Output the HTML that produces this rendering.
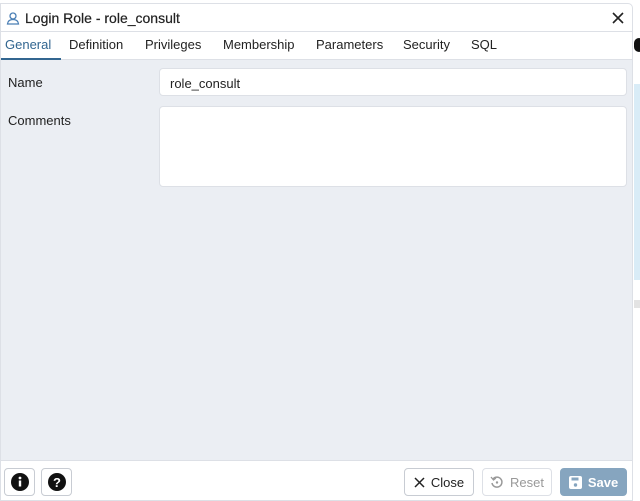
<!DOCTYPE html>
<html><head><style>
body{margin:0;width:640px;height:501px;position:relative;overflow:hidden;background:#fff;font-family:"Liberation Sans",sans-serif;font-size:13px;color:#222}
.bgs{position:absolute;left:634px;top:0;width:6px}
.dlg{position:absolute;left:0;top:3px;width:633px;height:498px;background:#fff;border:1px solid #dde0e6;border-radius:0 5px 0 0;box-sizing:border-box;overflow:hidden}
.title{height:27px;border-bottom:1px solid #dde0e6;display:flex;align-items:center;font-size:14px;color:#222;font-weight:500;-webkit-text-stroke:0.2px #222}
.tabs{height:27px;border-bottom:1px solid #dde0e6;position:relative}
.tabs span{position:absolute;top:5px;font-size:13px;color:#222}
.content{position:absolute;top:56px;left:0;right:0;height:400px;background:#ebeef3}
.input{position:absolute;background:#fff;border:1px solid #dde0e6;border-radius:4px;box-sizing:border-box}
.footer{position:absolute;top:456px;left:0;right:0;bottom:0;border-top:1px solid #dde0e6;background:#fff}
.btn{position:absolute;top:7px;height:28px;border:1px solid #c8ccd3;border-radius:4px;box-sizing:border-box;display:flex;align-items:center;justify-content:center;gap:6px;font-size:13px}
</style></head><body>
<div class="bgs" style="top:38px;height:16px"><div style="width:10px;height:14px;background:#111;border-radius:7px"></div></div>
<div class="bgs" style="top:84px;height:196px;background:#d9ecf7"></div>
<div class="bgs" style="top:300px;height:8px;background:#e3e3e3"></div>
<div class="dlg">
<div class="title"><svg width="14" height="14" viewBox="0 0 14 14" style="margin:0 5px 0 5px"><circle cx="7" cy="5" r="3" fill="none" stroke="#4a7fb5" stroke-width="1.3"/><path d="M1.5 13 Q2 8.5 7 8.5 Q12 8.5 12.5 13 Z" fill="none" stroke="#4a7fb5" stroke-width="1.3"/></svg>Login Role - role_consult
<svg width="12" height="12" viewBox="0 0 12 12" style="position:absolute;left:611px;top:8px"><path d="M1 1L11 11M11 1L1 11" stroke="#222" stroke-width="1.6"/></svg></div>
<div class="tabs">
<span style="left:4px;color:#326690">General</span><div style="position:absolute;left:0;width:60px;bottom:-1px;height:2px;background:#326690"></div>
<span style="left:68px">Definition</span><span style="left:144px">Privileges</span><span style="left:222px">Membership</span><span style="left:315px">Parameters</span><span style="left:402px">Security</span><span style="left:470px">SQL</span>
</div>
<div class="content">
<div style="position:absolute;left:7px;top:15px">Name</div>
<div class="input" style="left:158px;top:8px;width:468px;height:28px;padding:7px 10px">role_consult</div>
<div style="position:absolute;left:7px;top:53px">Comments</div>
<div class="input" style="left:158px;top:46px;width:468px;height:81px"></div>
</div>
<div class="footer">
<div class="btn" style="left:3px;width:31px"><svg width="18" height="18" viewBox="0 0 18 18"><circle cx="9" cy="9" r="9" fill="#111"/><rect x="7.8" y="7.5" width="2.4" height="6" fill="#fff"/><circle cx="9" cy="5" r="1.4" fill="#fff"/></svg></div>
<div class="btn" style="left:40px;width:31px"><svg width="18" height="18" viewBox="0 0 18 18"><circle cx="9" cy="9" r="9" fill="#111"/><text x="9" y="14" text-anchor="middle" fill="#fff" font-size="13" font-weight="bold" font-family="Liberation Sans">?</text></svg></div>
<div class="btn" style="left:403px;width:70px;color:#222"><svg width="11" height="11" viewBox="0 0 11 11"><path d="M1 1L10 10M10 1L1 10" stroke="#222" stroke-width="1.5"/></svg>Close</div>
<div class="btn" style="left:481px;width:70px;color:#999;border-color:#dde0e6"><svg width="14" height="14" viewBox="0 0 14 14"><path d="M3 4A5 5 0 1 1 2 8" fill="none" stroke="#999" stroke-width="1.5"/><path d="M1 2L3.5 5L6 3" fill="none" stroke="#999" stroke-width="1.3"/><circle cx="7" cy="7.5" r="1.2" fill="#999"/></svg>Reset</div>
<div class="btn" style="left:559px;width:67px;background:#86a5bf;border-color:#86a5bf;color:#fff;font-weight:bold"><svg width="13" height="13" viewBox="0 0 13 13"><rect x="0" y="0" width="13" height="13" rx="2" fill="#fff"/><rect x="2.5" y="1.5" width="7" height="3" fill="#86a5bf"/><circle cx="6.5" cy="9" r="1.7" fill="#86a5bf"/></svg>Save</div>
</div>
</div>
</body></html>
